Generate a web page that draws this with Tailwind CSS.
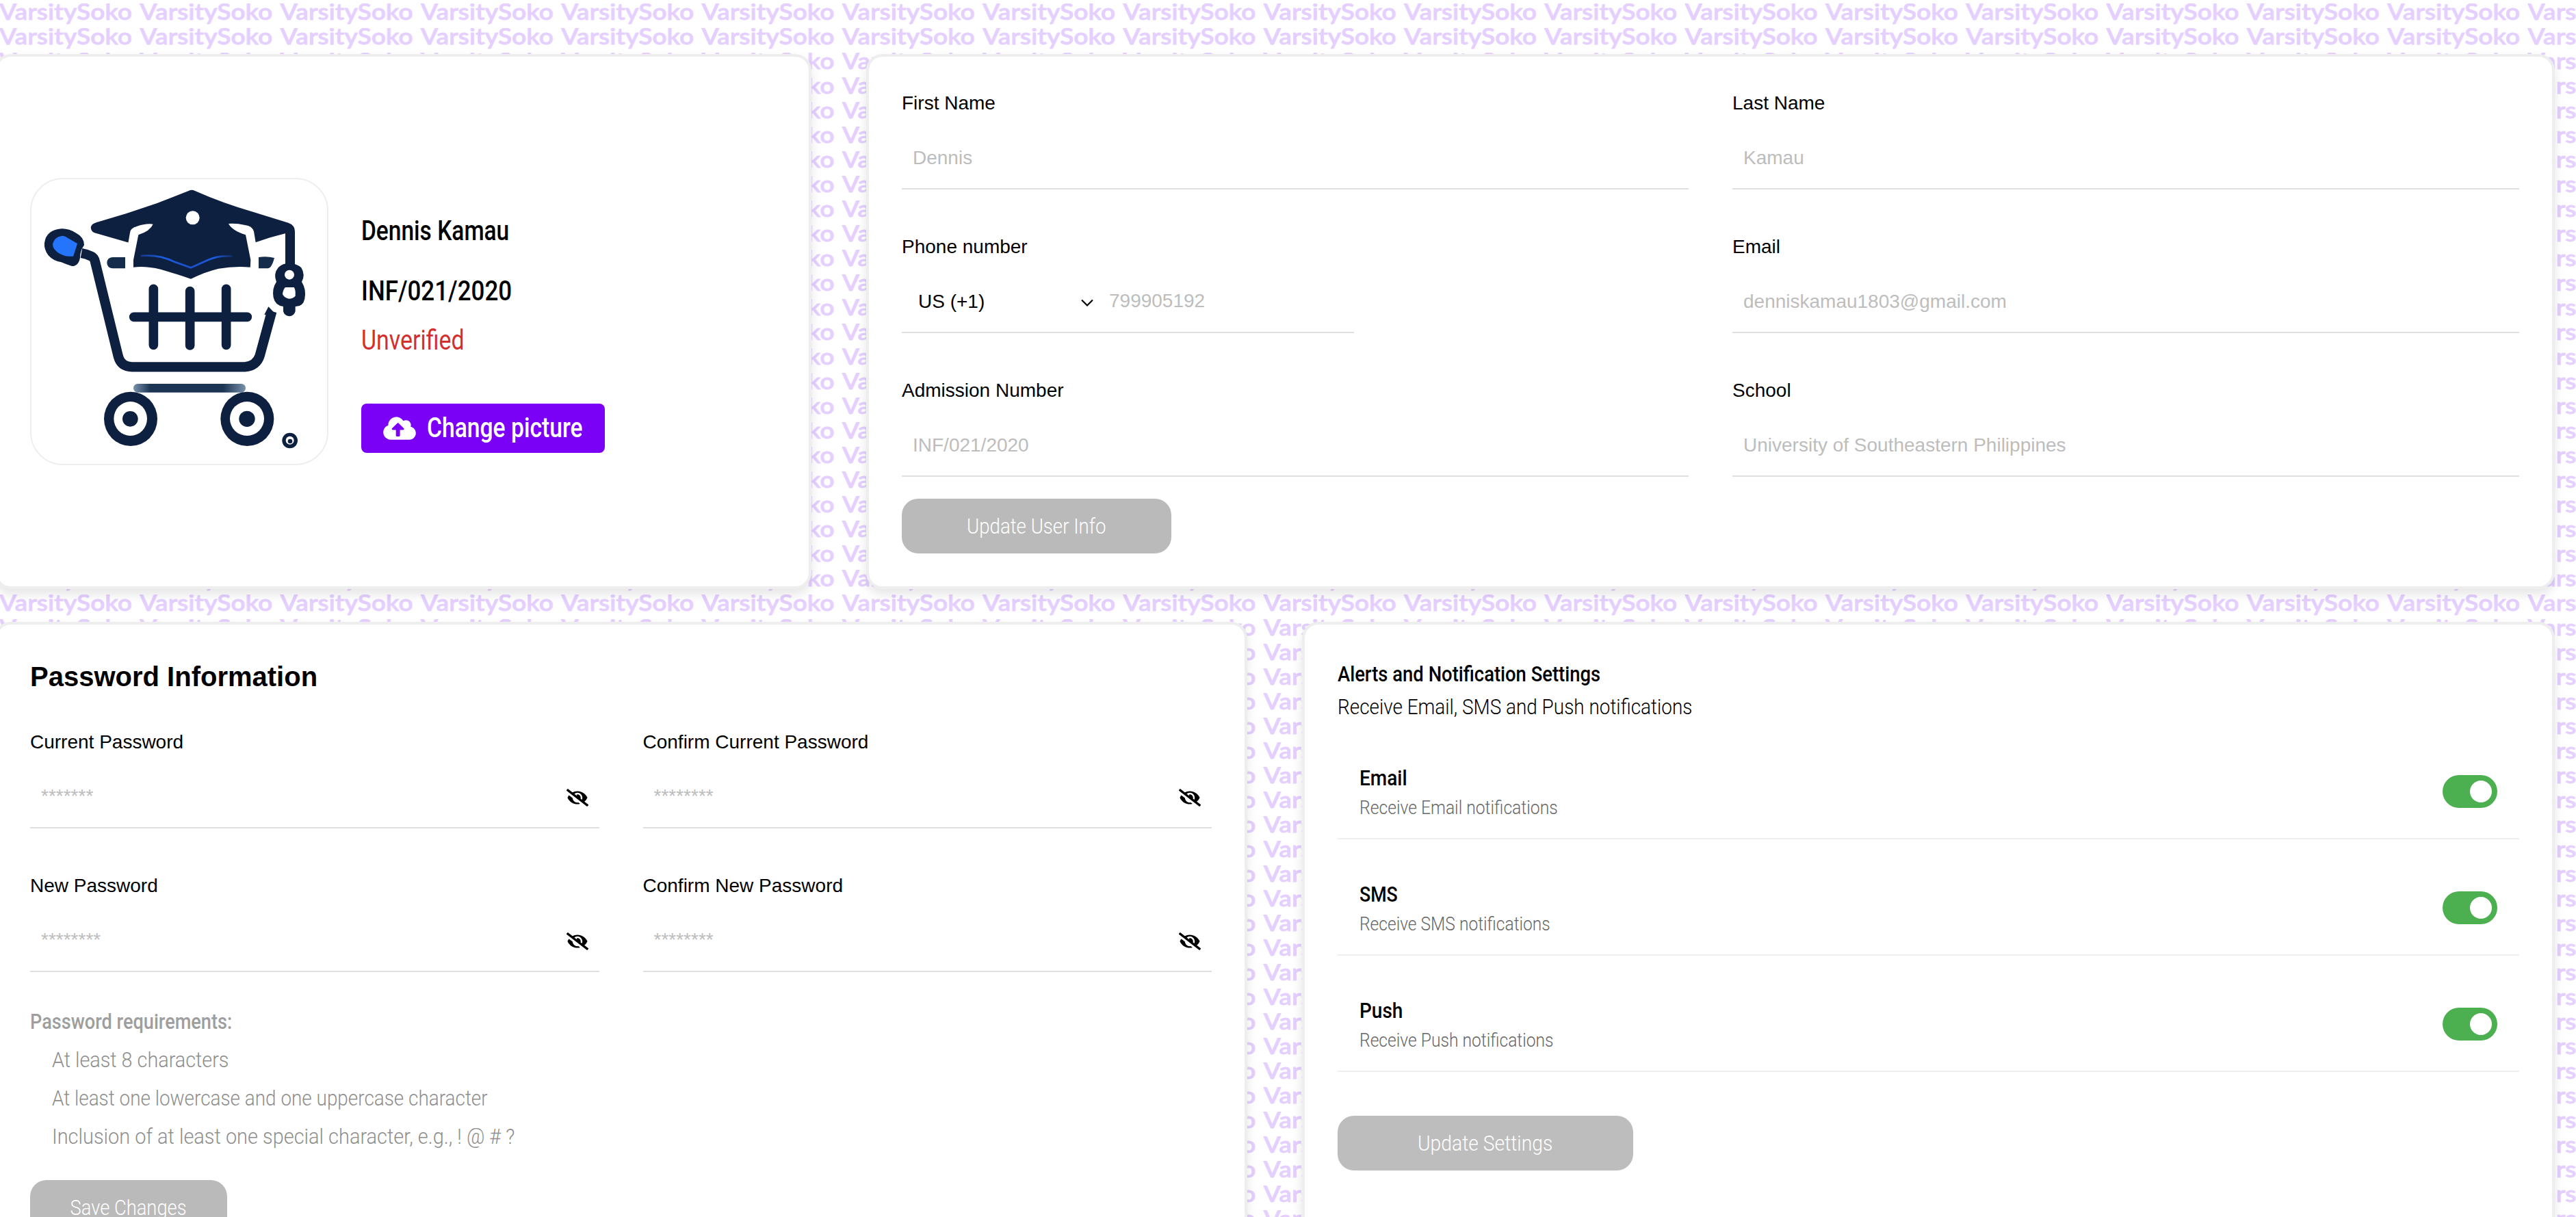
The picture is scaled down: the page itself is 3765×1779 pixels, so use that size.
<!DOCTYPE html>
<html lang="en">
<head>
<meta charset="utf-8">
<title>Account Settings</title>
<script src="https://cdn.jsdelivr.net/npm/@tailwindcss/browser@4"></script>
</head>
<body class="bg-white text-black overflow-hidden font-['Liberation_Sans',Arial,sans-serif]">
<div class="relative w-[3765px] h-[1779px] overflow-hidden">
  <svg class="absolute inset-0 w-full h-full" aria-hidden="true">
    <defs>
      <pattern id="brand" x="-1.5" y="5" width="205.3" height="36" patternUnits="userSpaceOnUse">
        <g fill="#e4cfff" stroke="#e4cfff" stroke-width=".8" stroke-linejoin="round" font-family="Lato, sans-serif" font-weight="600" font-size="32">
          <text y="24" x="0.5" textLength="194" lengthAdjust="spacingAndGlyphs">VarsitySoko</text>
          <text y="-12" x="0.5" textLength="194" lengthAdjust="spacingAndGlyphs">VarsitySoko</text>
        </g>
      </pattern>
      <symbol id="eye-off" viewBox="0 0 640 512"><path d="M320 400c-75.85 0-137.25-58.71-142.9-133.11L72.2 185.82c-13.79 17.3-26.48 35.59-36.72 55.59a32.35 32.35 0 0 0 0 29.19C89.71 376.41 197.07 448 320 448c26.91 0 52.87-4 77.89-10.46L346 397.39a144.13 144.13 0 0 1-26 2.61zm313.82 58.1l-110.55-85.44a331.25 331.25 0 0 0 81.25-102.07 32.35 32.35 0 0 0 0-29.19C550.29 135.59 442.93 64 320 64a308.15 308.15 0 0 0-147.32 37.7L45.46 3.37A16 16 0 0 0 23 6.18L3.37 31.45A16 16 0 0 0 6.18 53.9l588.36 454.73a16 16 0 0 0 22.46-2.81l19.64-25.27a16 16 0 0 0-2.82-22.45zm-183.72-142l-39.3-30.38A94.75 94.75 0 0 0 416 256a94.76 94.76 0 0 0-121.31-92.21A47.65 47.65 0 0 1 304 192a46.64 46.64 0 0 1-1.54 10l-73.61-56.89A142.31 142.31 0 0 1 320 112a143.92 143.92 0 0 1 144 144c0 21.63-5.29 41.79-13.9 60.11z"/></symbol>
    </defs>
    <rect width="100%" height="100%" fill="url(#brand)"/>
  </svg>

  <main class="relative -ml-2 w-[3742px] pt-[79px] flex flex-col gap-12">
    <div class="flex gap-20">
      <!-- Profile -->
      <section class="w-[1194px] h-[782px] shrink-0 bg-white border-4 border-[#eee] rounded-3xl shadow-[0_8px_16px_rgba(0,0,0,0.1)] pl-12 pt-[177px] flex items-start gap-12">
        <div class="w-[436px] h-[420px] rounded-[48px] border-2 border-[#eee] overflow-hidden shrink-0">
          <svg class="w-full h-full block" viewBox="139 96 1296 1248" preserveAspectRatio="none" fill="#0d2040">
            <defs><linearGradient id="axle"><stop offset="0" stop-color="#7a91ab"/><stop offset=".15" stop-color="#1c3554"/><stop offset=".8" stop-color="#1c3554"/><stop offset="1" stop-color="#7a91ab"/></linearGradient>
            <linearGradient id="glow"><stop offset="0" stop-color="#1d55d8" stop-opacity=".5"/><stop offset=".25" stop-color="#1d5be0"/><stop offset=".55" stop-color="#1a50cc"/><stop offset=".8" stop-color="#1d5be0"/><stop offset="1" stop-color="#1d5be0" stop-opacity=".2"/></linearGradient></defs>
            <path d="M828 147q14-7 28 0Q975 200 1115 241L1265 287Q1294 297 1294 325V470H1252V334Q1185 350 1117 374L1100 482Q1030 476 960 488Q900 502 838 533Q770 510 705 491Q640 476 586 482L566 374 415 331Q397 322 400 304Q404 291 425 285Q560 247 690 201Q770 170 828 147Z"/>
            <path d="M672 293Q640 289 600 303Q573 310 571 330L550 450V490H586V450L608 340Q660 322 672 293ZM1003 291Q1040 289 1075 297Q1106 300 1114 325L1135 450V490H1098L1100 450 1078 340Q1020 322 1003 291Z" fill="#fff"/>
            <circle cx="846" cy="265" r="30" fill="#fff"/>
            <path d="M618 432Q700 425 768 459L838 484L915 449Q960 430 1020 434" fill="none" stroke="url(#glow)" stroke-width="8"/>
            <path d="M270 313Q300 311 335 332Q370 350 370 385Q352 410 352 440Q345 478 316 477Q290 469 270 460Q235 455 213 430Q193 403 196 375Q204 318 270 313Z"/>
            <path d="M270 345Q285 342 300 355L340 378Q334 400 322 434Q290 437 262 422Q231 403 232 380Q240 350 270 345Z" fill="#2475fb"/>
            <path d="M358 420Q380 424 402 434Q415 440 418 458L520 875Q532 918 580 919H1075Q1125 915 1140 870L1193 675" fill="none" stroke="#0d2040" stroke-width="43"/>
            <path d="M1178 655L1212 690 1160 690Z"/>
            <path d="M494 438H550V487H494Q470 484 470 462Q471 440 494 438ZM1135 438Q1170 432 1204 441Q1192 487 1175 487H1135Z" fill="#152c4b"/>
            <g stroke="#0d2040" stroke-width="41" stroke-linecap="round" fill="none"><path d="M674 577V823M834 587V825M993 577V823M588 700H1085"/></g>
            <path d="M1222 482Q1240 464 1269 464Q1300 464 1322 484Q1341 515 1324 546Q1345 580 1337 620Q1330 655 1296 654V675Q1290 697 1269 697Q1248 695 1243 675V654Q1208 650 1200 615Q1193 575 1213 546Q1198 510 1222 482Z"/>
            <circle cx="1270" cy="515" r="21" fill="#fff"/>
            <path d="M1252 570H1290Q1298 580 1296 608Q1285 620 1268 620Q1246 616 1240 600Q1242 580 1252 570Z" fill="#fff"/>
            <rect x="586" y="993" width="492" height="38" rx="19" fill="url(#axle)"/>
            <ellipse cx="574" cy="1147" rx="117" ry="119"/><ellipse cx="573" cy="1146" rx="73" ry="75" fill="#fff"/><circle cx="572" cy="1147" r="34"/>
            <ellipse cx="1085" cy="1147" rx="117" ry="119"/><ellipse cx="1084" cy="1146" rx="75" ry="75" fill="#fff"/><circle cx="1084" cy="1147" r="35"/>
            <circle cx="1272" cy="1242" r="34"/><circle cx="1272" cy="1241" r="18" fill="#fff"/><circle cx="1273" cy="1245" r="10"/>
          </svg>
        </div>
        <div class="pt-[42px] flex flex-col items-start font-[Roboto,sans-serif] text-[40px] leading-[72px] font-medium whitespace-nowrap">
          <div class="mb-4"><span data-w="216" class="inline-block origin-left">Dennis Kamau</span></div>
          <div class="h-[72px]"><span data-w="220" class="inline-block origin-left">INF/021/2020</span></div>
          <div class="font-normal text-[#d32f2f]"><span data-w="151" class="inline-block origin-left">Unverified</span></div>
          <button class="mt-14 w-[356px] h-[72px] rounded-lg bg-[#7b00f6] text-white flex items-center pl-8 gap-4">
            <svg class="w-12 h-[38px] shrink-0" viewBox="0 0 640 512" fill="currentColor"><path d="M537.6 226.6c4.1-10.7 6.4-22.4 6.4-34.6 0-53-43-96-96-96-19.7 0-38.1 6-53.3 16.2C367 64.2 315.3 32 256 32c-88.4 0-160 71.6-160 160 0 2.7.1 5.4.2 8.1C40.2 219.8 0 273.2 0 336c0 79.5 64.5 144 144 144h368c70.7 0 128-57.3 128-128 0-61.9-44-113.6-102.4-125.4zM393.4 288H328v112c0 8.8-7.2 16-16 16h-48c-8.8 0-16-7.2-16-16V288h-65.4c-14.3 0-21.4-17.2-11.3-27.3l105.4-105.4c6.2-6.2 16.4-6.2 22.6 0l105.4 105.4c10.1 10.1 2.9 27.3-11.3 27.3z"/></svg>
            <span data-w="228" class="inline-block origin-left shrink-0">Change picture</span>
          </button>
        </div>
      </section>

      <!-- User info -->
      <section class="flex-1 h-[782px] bg-white border-4 border-[#eee] rounded-3xl shadow-[0_8px_16px_rgba(0,0,0,0.1)] p-12 text-[28px]">
        <div class="grid grid-cols-2 gap-16">
          <div><div class="leading-10 mb-3.5">First Name</div><div class="h-[92px] border-b-2 border-[#e0e0e0] pl-4 leading-[92px] text-[#bdbdbd]">Dennis</div></div>
          <div><div class="leading-10 mb-3.5">Last Name</div><div class="h-[92px] border-b-2 border-[#e0e0e0] pl-4 leading-[92px] text-[#bdbdbd]">Kamau</div></div>
          <div><div class="leading-10 mb-3.5">Phone number</div>
            <div class="w-[661px] h-[92px] border-b-2 border-[#e0e0e0] pl-6 leading-[92px] flex items-center">
              <div class="w-[237px] shrink-0 pt-0.5">US (+1)</div>
              <svg class="w-5 h-3 shrink-0 mt-1.5" viewBox="0 0 20 12" fill="none" stroke="#000" stroke-width="2.2"><path d="M2 1.5l8 8 8-8"/></svg>
              <div class="pl-[22px] text-[#bdbdbd]">799905192</div>
            </div></div>
          <div><div class="leading-10 mb-3.5">Email</div><div class="h-[92px] border-b-2 border-[#e0e0e0] pl-4 leading-[92px] text-[#bdbdbd]">denniskamau1803@gmail.com</div></div>
          <div><div class="leading-10 mb-3.5">Admission Number</div><div class="h-[92px] border-b-2 border-[#e0e0e0] pl-4 leading-[92px] text-[#bdbdbd]">INF/021/2020</div></div>
          <div><div class="leading-10 mb-3.5">School</div><div class="h-[92px] border-b-2 border-[#e0e0e0] pl-4 leading-[92px] text-[#bdbdbd]">University of Southeastern Philippines</div></div>
        </div>
        <button class="mt-8 w-[394px] h-20 rounded-3xl bg-[#bababa] text-white font-[Roboto,sans-serif] text-[32px] flex items-center justify-center whitespace-nowrap"><span data-w="203" class="inline-block shrink-0 font-light">Update User Info</span></button>
      </section>
    </div>

    <div class="flex gap-20">
      <!-- Password -->
      <section class="w-[1831px] h-[940px] shrink-0 bg-white border-4 border-[#eee] rounded-3xl shadow-[0_8px_16px_rgba(0,0,0,0.1)] p-12 text-[28px]">
        <h2 class="text-[40px] font-bold leading-[56px] mb-12">Password Information</h2>
        <div class="grid grid-cols-2 gap-16">
          <div><div class="leading-10 mb-3.5">Current Password</div><div class="h-[92px] border-b-2 border-[#e0e0e0] px-4 leading-[90px] text-[#bdbdbd] flex items-center justify-between"><span>*******</span><svg class="w-8 h-[26px] mt-1 fill-black"><use href="#eye-off"/></svg></div></div>
          <div><div class="leading-10 mb-3.5">Confirm Current Password</div><div class="h-[92px] border-b-2 border-[#e0e0e0] px-4 leading-[90px] text-[#bdbdbd] flex items-center justify-between"><span>********</span><svg class="w-8 h-[26px] mt-1 fill-black"><use href="#eye-off"/></svg></div></div>
          <div><div class="leading-10 mb-3.5">New Password</div><div class="h-[92px] border-b-2 border-[#e0e0e0] px-4 leading-[90px] text-[#bdbdbd] flex items-center justify-between"><span>********</span><svg class="w-8 h-[26px] mt-1 fill-black"><use href="#eye-off"/></svg></div></div>
          <div><div class="leading-10 mb-3.5">Confirm New Password</div><div class="h-[92px] border-b-2 border-[#e0e0e0] px-4 leading-[90px] text-[#bdbdbd] flex items-center justify-between"><span>********</span><svg class="w-8 h-[26px] mt-1 fill-black"><use href="#eye-off"/></svg></div></div>
        </div>
        <div class="mt-11 font-[Roboto,sans-serif] text-[32px] leading-[56px] text-[#9e9e9e] whitespace-nowrap">
          <div class="font-medium"><span data-w="295" class="inline-block origin-left">Password requirements:</span></div>
          <ul class="pl-8 font-light text-[#8e8e8e]">
            <li><span data-w="258" class="inline-block origin-left">At least 8 characters</span></li>
            <li><span data-w="637" class="inline-block origin-left">At least one lowercase and one uppercase character</span></li>
            <li><span data-w="676" class="inline-block origin-left">Inclusion of at least one special character, e.g., ! @ # ?</span></li>
          </ul>
        </div>
        <button class="mt-9 w-[288px] h-20 rounded-3xl bg-[#bababa] text-white font-[Roboto,sans-serif] text-[32px] flex items-center justify-center whitespace-nowrap"><span data-w="170" class="inline-block shrink-0 font-light">Save Changes</span></button>
      </section>

      <!-- Notifications -->
      <section class="flex-1 h-[940px] bg-white border-4 border-[#eee] rounded-3xl shadow-[0_8px_16px_rgba(0,0,0,0.1)] p-12 font-[Roboto,sans-serif] text-[32px] leading-[48px] whitespace-nowrap">
        <div class="font-medium"><span data-w="384" class="inline-block origin-left">Alerts and Notification Settings</span></div>
        <div><span data-w="518" class="inline-block origin-left font-light">Receive Email, SMS and Push notifications</span></div>
        <div class="mt-8 flex flex-col gap-8">
          <div class="h-[138px] px-8 border-b-2 border-[#eee] flex items-center justify-between">
            <div><div class="font-medium"><span data-w="70" class="inline-block origin-left">Email</span></div><div class="text-[28px] leading-10 font-light text-[#666]"><span data-w="290" class="inline-block origin-left">Receive Email notifications</span></div></div>
            <div class="w-20 h-12 rounded-full bg-[#4caf50] flex items-center justify-end pr-2"><div class="size-8 rounded-full bg-white"></div></div>
          </div>
          <div class="h-[138px] px-8 border-b-2 border-[#eee] flex items-center justify-between">
            <div><div class="font-medium"><span data-w="56" class="inline-block origin-left">SMS</span></div><div class="text-[28px] leading-10 font-light text-[#666]"><span data-w="279" class="inline-block origin-left">Receive SMS notifications</span></div></div>
            <div class="w-20 h-12 rounded-full bg-[#4caf50] flex items-center justify-end pr-2"><div class="size-8 rounded-full bg-white"></div></div>
          </div>
          <div class="h-[138px] px-8 border-b-2 border-[#eee] flex items-center justify-between">
            <div><div class="font-medium"><span data-w="63" class="inline-block origin-left">Push</span></div><div class="text-[28px] leading-10 font-light text-[#666]"><span data-w="284" class="inline-block origin-left">Receive Push notifications</span></div></div>
            <div class="w-20 h-12 rounded-full bg-[#4caf50] flex items-center justify-end pr-2"><div class="size-8 rounded-full bg-white"></div></div>
          </div>
        </div>
        <button class="mt-16 w-[432px] h-20 rounded-3xl bg-[#bdbdbd] text-white flex items-center justify-center"><span data-w="197" class="inline-block shrink-0 font-light">Update Settings</span></button>
      </section>
    </div>
  </main>
</div>
<script>
  // Condense each label horizontally to its design width, whenever its natural width changes.
  function fit(el) {
    if (el.offsetWidth) el.style.transform = 'scaleX(' + (el.dataset.w / el.offsetWidth) + ')';
  }
  var labels = document.querySelectorAll('[data-w]');
  var observer = new ResizeObserver(function (entries) {
    entries.forEach(function (entry) { fit(entry.target); });
  });
  labels.forEach(function (el) { fit(el); observer.observe(el); });
  window.addEventListener('load', function () { labels.forEach(fit); });
</script>
</body>
</html>
